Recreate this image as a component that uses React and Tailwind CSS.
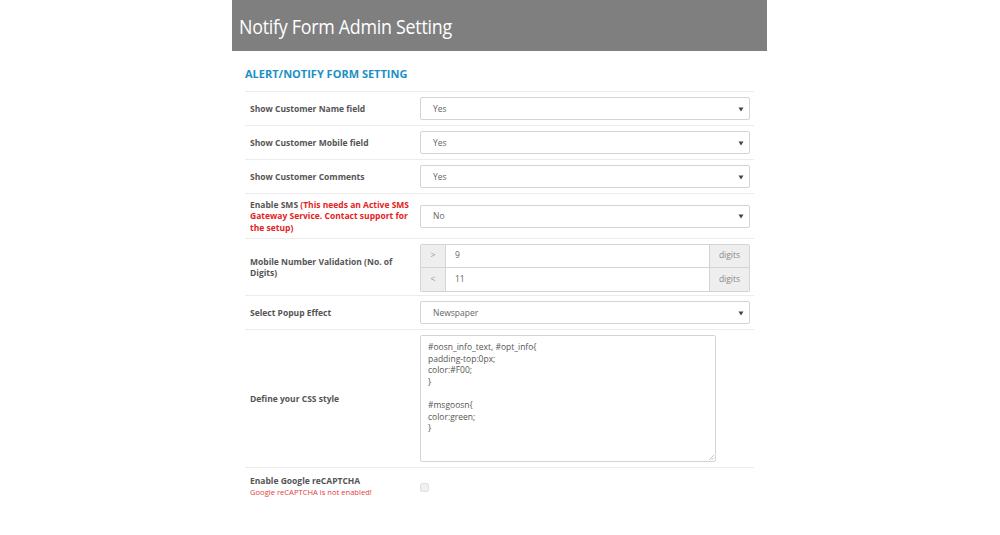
import React from "react";

const font = { fontFamily: '"Open Sans", "Noto Sans", sans-serif' };

function Arrow() {
  return (
    <svg width="6" height="5" viewBox="0 0 6 5" className="shrink-0">
      <path d="M0.5 0.5 L5.5 0.5 L3 4.5 Z" fill="#444" />
    </svg>
  );
}

function Select({ value }) {
  return (
    <div className="w-[330px] h-[23px] border border-[#d4d4d4] rounded-[2px] bg-white flex items-center justify-between pl-[12px] pr-[5px] pt-[1px] text-[8.5px] text-[#666]">
      <span>{value}</span>
      <Arrow />
    </div>
  );
}

function Row({ label, children, h, border = true }) {
  return (
    <div className={`flex items-center ${border ? "border-b border-[#ececec]" : ""}`} style={{ height: h }}>
      <div className="w-[175px] pl-[5px] pr-[8px] text-[8.5px] font-bold text-[#555] leading-[11.5px]">{label}</div>
      <div className="flex-1">{children}</div>
    </div>
  );
}

function InputGroup({ sign, value, top }) {
  return (
    <div className={`w-[330px] h-[24px] flex border border-[#d4d4d4] ${top ? "rounded-t-[2px]" : "rounded-b-[2px] border-t-0"} text-[8.5px] text-[#666]`}>
      <div className="w-[25px] bg-[#eeeeee] border-r border-[#d4d4d4] flex items-center justify-center text-[#999]">{sign}</div>
      <div className="flex-1 bg-white flex items-center pl-[9px]">{value}</div>
      <div className="w-[40px] bg-[#eeeeee] border-l border-[#d4d4d4] flex items-center justify-center text-[#888]">digits</div>
    </div>
  );
}

export default function App() {
  const css = ["#oosn_info_text, #opt_info{", "padding-top:0px;", "color:#F00;", "}", "\u00a0", "#msgoosn{", "color:green;", "}"];
  return (
    <div className="w-[1000px] h-[535px] bg-white overflow-hidden flex justify-center" style={font}>
      <div className="w-[535px] ml-[-1px] flex flex-col">
        <div className="h-[51px] bg-[#7f7f7f] flex items-center pl-[7px] pt-[2px]">
          <span className="text-white text-[20.5px] tracking-[-0.3px] whitespace-nowrap" style={{ fontFamily: '"Open Sans", sans-serif', transform: "scaleX(0.87)", transformOrigin: "left" }}>Notify Form Admin Setting</span>
        </div>
        <div className="px-[13px]">
          <div className="h-[41px] flex items-center pt-[7px] border-b border-[#ececec]">
            <span className="text-[#1b8fc8] text-[11px] font-bold">ALERT/NOTIFY FORM SETTING</span>
          </div>
          <Row label="Show Customer Name field" h={34}><Select value="Yes" /></Row>
          <Row label="Show Customer Mobile field" h={34}><Select value="Yes" /></Row>
          <Row label="Show Customer Comments" h={34}><Select value="Yes" /></Row>
          <Row
            label={<>Enable SMS <span className="text-[#e52222]">(This needs an Active SMS Gateway Service. Contact support for the setup)</span></>}
            h={45}
          >
            <Select value="No" />
          </Row>
          <Row label="Mobile Number Validation (No. of Digits)" h={57}>
            <div className="pt-[1px]">
              <InputGroup sign=">" value="9" top />
              <InputGroup sign="<" value="11" />
            </div>
          </Row>
          <Row label="Select Popup Effect" h={34}><Select value="Newspaper" /></Row>
          <Row label="Define your CSS style" h={138}>
            <div className="relative w-[296px] h-[127px] border border-[#d4d4d4] rounded-[2px] bg-white pl-[7px] pt-[5px] text-[8.5px] text-[#555] leading-[11.6px]">
              {css.map((l, i) => <div key={i}>{l}</div>)}
              <svg width="5" height="5" viewBox="0 0 5 5" className="absolute right-[1px] bottom-[1px]">
                <path d="M0 5 L5 0 M2.5 5 L5 2.5" stroke="#aaa" strokeWidth="0.7" />
              </svg>
            </div>
          </Row>
          <div className="flex items-start pt-[7px]">
            <div className="w-[175px] pl-[5px]">
              <div className="text-[8.5px] font-bold text-[#555] leading-[12px]">Enable Google reCAPTCHA</div>
              <div className="text-[7.6px] text-[#e23b3b] leading-[11px]">Google reCAPTCHA is not enabled!</div>
            </div>
            <div className="pt-[8px]">
              <div className="w-[9px] h-[9px] rounded-[2px] bg-[#f0f0f0] border border-[#e0e0e0]" />
            </div>
          </div>
        </div>
      </div>
    </div>
  );
}
